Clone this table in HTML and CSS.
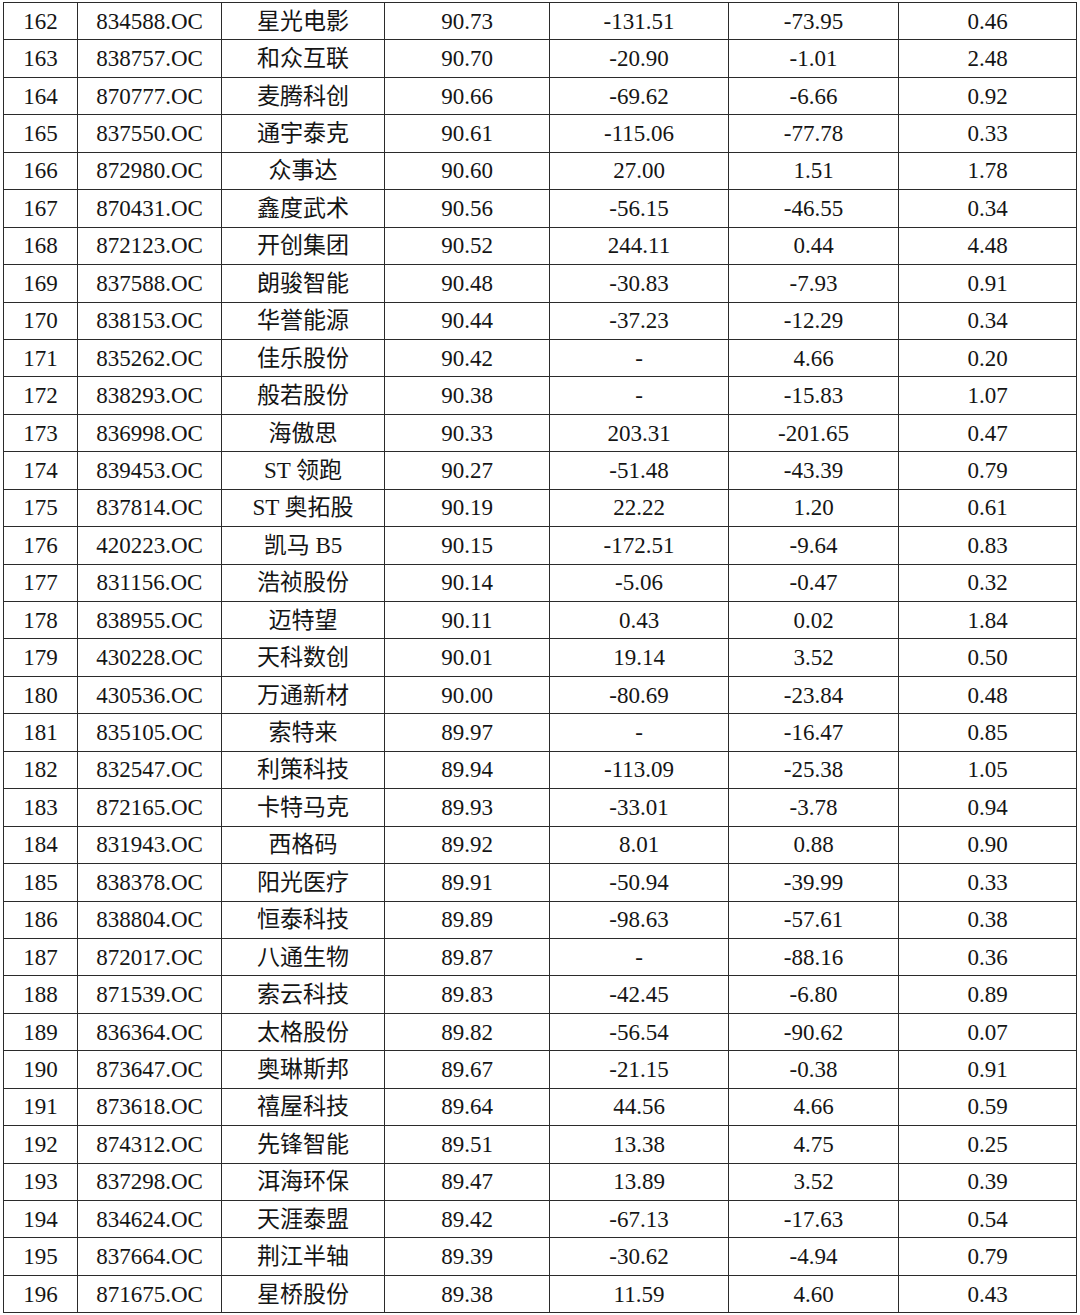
FILE: index.html
```html
<!DOCTYPE html>
<html lang="zh-CN">
<head>
<meta charset="utf-8">
<title>表格</title>
<link rel="stylesheet" href="styles.css">
</head>
<body>
<table class="data">
<colgroup>
<col class="c1"><col class="c2"><col class="c3"><col class="c4"><col class="c5"><col class="c6"><col class="c7">
</colgroup>
<tbody>
<tr><td>162</td><td>834588.OC</td><td>星光电影</td><td>90.73</td><td>-131.51</td><td>-73.95</td><td>0.46</td></tr>
<tr><td>163</td><td>838757.OC</td><td>和众互联</td><td>90.70</td><td>-20.90</td><td>-1.01</td><td>2.48</td></tr>
<tr><td>164</td><td>870777.OC</td><td>麦腾科创</td><td>90.66</td><td>-69.62</td><td>-6.66</td><td>0.92</td></tr>
<tr><td>165</td><td>837550.OC</td><td>通宇泰克</td><td>90.61</td><td>-115.06</td><td>-77.78</td><td>0.33</td></tr>
<tr><td>166</td><td>872980.OC</td><td>众事达</td><td>90.60</td><td>27.00</td><td>1.51</td><td>1.78</td></tr>
<tr><td>167</td><td>870431.OC</td><td>鑫度武术</td><td>90.56</td><td>-56.15</td><td>-46.55</td><td>0.34</td></tr>
<tr><td>168</td><td>872123.OC</td><td>开创集团</td><td>90.52</td><td>244.11</td><td>0.44</td><td>4.48</td></tr>
<tr><td>169</td><td>837588.OC</td><td>朗骏智能</td><td>90.48</td><td>-30.83</td><td>-7.93</td><td>0.91</td></tr>
<tr><td>170</td><td>838153.OC</td><td>华誉能源</td><td>90.44</td><td>-37.23</td><td>-12.29</td><td>0.34</td></tr>
<tr><td>171</td><td>835262.OC</td><td>佳乐股份</td><td>90.42</td><td>-</td><td>4.66</td><td>0.20</td></tr>
<tr><td>172</td><td>838293.OC</td><td>般若股份</td><td>90.38</td><td>-</td><td>-15.83</td><td>1.07</td></tr>
<tr><td>173</td><td>836998.OC</td><td>海傲思</td><td>90.33</td><td>203.31</td><td>-201.65</td><td>0.47</td></tr>
<tr><td>174</td><td>839453.OC</td><td>ST 领跑</td><td>90.27</td><td>-51.48</td><td>-43.39</td><td>0.79</td></tr>
<tr><td>175</td><td>837814.OC</td><td>ST 奥拓股</td><td>90.19</td><td>22.22</td><td>1.20</td><td>0.61</td></tr>
<tr><td>176</td><td>420223.OC</td><td>凯马 B5</td><td>90.15</td><td>-172.51</td><td>-9.64</td><td>0.83</td></tr>
<tr><td>177</td><td>831156.OC</td><td>浩祯股份</td><td>90.14</td><td>-5.06</td><td>-0.47</td><td>0.32</td></tr>
<tr><td>178</td><td>838955.OC</td><td>迈特望</td><td>90.11</td><td>0.43</td><td>0.02</td><td>1.84</td></tr>
<tr><td>179</td><td>430228.OC</td><td>天科数创</td><td>90.01</td><td>19.14</td><td>3.52</td><td>0.50</td></tr>
<tr><td>180</td><td>430536.OC</td><td>万通新材</td><td>90.00</td><td>-80.69</td><td>-23.84</td><td>0.48</td></tr>
<tr><td>181</td><td>835105.OC</td><td>索特来</td><td>89.97</td><td>-</td><td>-16.47</td><td>0.85</td></tr>
<tr><td>182</td><td>832547.OC</td><td>利策科技</td><td>89.94</td><td>-113.09</td><td>-25.38</td><td>1.05</td></tr>
<tr><td>183</td><td>872165.OC</td><td>卡特马克</td><td>89.93</td><td>-33.01</td><td>-3.78</td><td>0.94</td></tr>
<tr><td>184</td><td>831943.OC</td><td>西格码</td><td>89.92</td><td>8.01</td><td>0.88</td><td>0.90</td></tr>
<tr><td>185</td><td>838378.OC</td><td>阳光医疗</td><td>89.91</td><td>-50.94</td><td>-39.99</td><td>0.33</td></tr>
<tr><td>186</td><td>838804.OC</td><td>恒泰科技</td><td>89.89</td><td>-98.63</td><td>-57.61</td><td>0.38</td></tr>
<tr><td>187</td><td>872017.OC</td><td>八通生物</td><td>89.87</td><td>-</td><td>-88.16</td><td>0.36</td></tr>
<tr><td>188</td><td>871539.OC</td><td>索云科技</td><td>89.83</td><td>-42.45</td><td>-6.80</td><td>0.89</td></tr>
<tr><td>189</td><td>836364.OC</td><td>太格股份</td><td>89.82</td><td>-56.54</td><td>-90.62</td><td>0.07</td></tr>
<tr><td>190</td><td>873647.OC</td><td>奥琳斯邦</td><td>89.67</td><td>-21.15</td><td>-0.38</td><td>0.91</td></tr>
<tr><td>191</td><td>873618.OC</td><td>禧屋科技</td><td>89.64</td><td>44.56</td><td>4.66</td><td>0.59</td></tr>
<tr><td>192</td><td>874312.OC</td><td>先锋智能</td><td>89.51</td><td>13.38</td><td>4.75</td><td>0.25</td></tr>
<tr><td>193</td><td>837298.OC</td><td>洱海环保</td><td>89.47</td><td>13.89</td><td>3.52</td><td>0.39</td></tr>
<tr><td>194</td><td>834624.OC</td><td>天涯泰盟</td><td>89.42</td><td>-67.13</td><td>-17.63</td><td>0.54</td></tr>
<tr><td>195</td><td>837664.OC</td><td>荆江半轴</td><td>89.39</td><td>-30.62</td><td>-4.94</td><td>0.79</td></tr>
<tr><td>196</td><td>871675.OC</td><td>星桥股份</td><td>89.38</td><td>11.59</td><td>4.60</td><td>0.43</td></tr>
</tbody>
</table>
</body>
</html>
```
FILE: styles.css
```css
html, body {
  margin: 0;
  padding: 0;
  background: #ffffff;
}

body {
  padding: 2px 0 0 3px;
}

.data {
  border-collapse: collapse;
  table-layout: fixed;
  width: 1073px;
  font-family: "Liberation Serif", "Noto Sans CJK SC", serif;
  font-size: 23px;
  color: #151515;
}

.c1 { width: 74px; }
.c2 { width: 144px; }
.c3 { width: 163px; }
.c4 { width: 165px; }
.c5 { width: 179px; }
.c6 { width: 170px; }
.c7 { width: 178px; }

.data td {
  border: 1.5px solid #2b2b2b;
  height: 36.45px;
  padding: 0;
  text-align: center;
  vertical-align: middle;
  line-height: 1;
  white-space: nowrap;
}
```
